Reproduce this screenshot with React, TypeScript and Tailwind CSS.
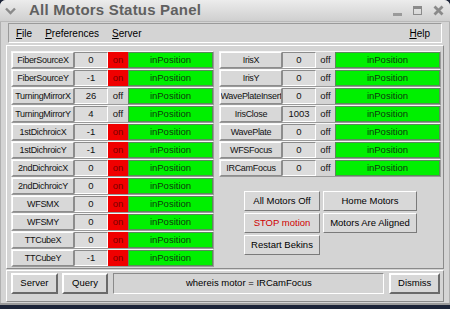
const font = { fontFamily: '"Liberation Sans", Arial, sans-serif' };

type Motor = { name: string; pos: string; on: boolean };

const left: Motor[] = [
  { name: "FiberSourceX", pos: "0", on: true },
  { name: "FiberSourceY", pos: "-1", on: true },
  { name: "TurningMirrorX", pos: "26", on: false },
  { name: "TurningMirrorY", pos: "4", on: false },
  { name: "1stDichroicX", pos: "-1", on: true },
  { name: "1stDichroicY", pos: "-1", on: true },
  { name: "2ndDichroicX", pos: "0", on: true },
  { name: "2ndDichroicY", pos: "0", on: true },
  { name: "WFSMX", pos: "0", on: true },
  { name: "WFSMY", pos: "0", on: true },
  { name: "TTCubeX", pos: "0", on: true },
  { name: "TTCubeY", pos: "-1", on: true },
];

const right: Motor[] = [
  { name: "IrisX", pos: "0", on: false },
  { name: "IrisY", pos: "0", on: false },
  { name: "WavePlateInsert", pos: "0", on: false },
  { name: "IrisClose", pos: "1003", on: false },
  { name: "WavePlate", pos: "0", on: false },
  { name: "WFSFocus", pos: "0", on: false },
  { name: "IRCamFocus", pos: "0", on: false },
];

function MotorRow({ m, wide }: { m: Motor; wide?: boolean }) {
  return (
    <div className="flex h-[18px] border border-t-[#f6f6f6] border-l-[#f6f6f6] border-b-[#9a9a9a] border-r-[#9a9a9a] text-[9.5px] leading-none text-[#111]">
      <div className="w-[62px] flex items-center justify-center overflow-hidden whitespace-nowrap bg-[#d8d8d8] border border-t-white border-l-white border-b-[#8c8c8c] border-r-[#8c8c8c] text-[9px] tracking-[-0.3px]">
        {m.name}
      </div>
      <div className="w-[34px] flex items-center justify-center bg-[#dcdcdc] border border-t-[#8c8c8c] border-l-[#8c8c8c] border-b-white border-r-white">
        {m.pos}
      </div>
      {m.on ? (
        <div className="w-[20px] flex items-center justify-center bg-[#f00000] text-[#7a0000]">on</div>
      ) : (
        <div className={`${wide ? "w-[19px]" : "w-[20px]"} flex items-center justify-center`}>off</div>
      )}
      <div className="flex-1 flex items-center justify-center bg-[#00f000] text-[#0d3a0d] border border-[#5a8a5a]">
        inPosition
      </div>
    </div>
  );
}

function Btn({ children, className = "" }: { children: React.ReactNode; className?: string }) {
  return (
    <div
      className={`h-[20px] flex items-center justify-center bg-[#d8d8d8] border border-t-white border-l-white border-b-[#7a7a7a] border-r-[#7a7a7a] text-[9.5px] ${className}`}
    >
      {children}
    </div>
  );
}

export default function App() {
  return (
    <div className="w-[450px] h-[309px] bg-[#1c2438] overflow-hidden" style={font}>
      <div className="w-[450px] h-[305px] bg-[#d4d4d4] rounded-t-[6px] flex flex-col border-b-2 border-[#9a9a9a]">
        {/* title bar */}
        <div className="h-[22px] flex items-center bg-gradient-to-b from-[#ececec] to-[#cfcfcf] rounded-t-[6px] border-b border-[#b8b8b8] pl-[5px] pr-[6px]">
          <svg width="11" height="8" viewBox="0 0 11 8" className="mr-[13px]">
            <path d="M1 1.5 L5.5 6 L10 1.5" fill="none" stroke="#8a8a8a" strokeWidth="2.4" />
          </svg>
          <span className="text-[15px] font-bold text-[#606060] tracking-[0.2px]">All Motors Status Panel</span>
          <div className="ml-auto flex items-center gap-[11px]">
            <div className="w-[9px] h-[3px] bg-[#9a9a9a] mt-[8px]" />
            <div className="w-[9px] h-[9px] border border-[#8a8a8a] border-t-[3px]" />
            <svg width="11" height="11" viewBox="0 0 11 11">
              <path d="M1.5 1.5 L9.5 9.5 M9.5 1.5 L1.5 9.5" stroke="#8a8a8a" strokeWidth="2.8" />
            </svg>
          </div>
        </div>

        <div className="flex-1 flex flex-col px-[5px] pt-[1px] border-l border-r border-[#b0b0b0]">
          {/* menu bar */}
          <div className="mx-[2px] h-[20px] flex items-center text-[10px] text-black border border-t-[#9a9a9a] border-l-[#9a9a9a] border-b-white border-r-white px-[7px]">
            <span className="mr-[13px]"><u>F</u>ile</span>
            <span className="mr-[13px]"><u>P</u>references</span>
            <span><u>S</u>erver</span>
            <span className="ml-auto mr-[4px]"><u>H</u>elp</span>
          </div>

          {/* main panel */}
          <div className="mt-[2px] h-[224px] border border-t-white border-l-white border-b-[#8a8a8a] border-r-[#8a8a8a] flex gap-[5px] pl-[4px] pt-[5px]">
            <div className="w-[203px] flex flex-col">
              {left.map((m) => (
                <MotorRow key={m.name} m={m} />
              ))}
            </div>
            <div className="w-[222px] flex flex-col">
              {right.map((m) => (
                <MotorRow key={m.name} m={m} wide />
              ))}
              <div className="mt-[14px] ml-[25px] flex flex-col gap-[2px]">
                <div className="flex gap-[3px]">
                  <Btn className="w-[76px]">All Motors Off</Btn>
                  <Btn className="w-[94px]">Home Motors</Btn>
                </div>
                <div className="flex gap-[3px]">
                  <Btn className="w-[76px] text-[#d00000]">STOP motion</Btn>
                  <Btn className="w-[94px]">Motors Are Aligned</Btn>
                </div>
                <div className="flex gap-[3px]">
                  <Btn className="w-[76px]">Restart Bekins</Btn>
                </div>
              </div>
            </div>
          </div>

          {/* bottom bar */}
          <div className="mt-[1px] h-[32px] border border-t-white border-l-white border-b-[#8a8a8a] border-r-[#8a8a8a] flex items-start pt-[2px] pl-[4px] pr-[3px] gap-[4px] text-[9.5px]">
            <div className="w-[47px] h-[21px] flex items-center justify-center bg-[#d8d8d8] border-2 border-t-white border-l-white border-b-[#6a6a6a] border-r-[#6a6a6a]">Server</div>
            <div className="w-[47px] h-[21px] flex items-center justify-center bg-[#d8d8d8] border-2 border-t-white border-l-white border-b-[#6a6a6a] border-r-[#6a6a6a]">Query</div>
            <div className="w-[273px] h-[21px] ml-[1px] flex items-center justify-center bg-[#d4d4d4] border border-t-[#8a8a8a] border-l-[#8a8a8a] border-b-white border-r-white">
              whereis motor = IRCamFocus
            </div>
            <div className="w-[51px] h-[21px] ml-[1px] flex items-center justify-center bg-[#d8d8d8] border-2 border-t-white border-l-white border-b-[#6a6a6a] border-r-[#6a6a6a]">Dismiss</div>
          </div>
        </div>
      </div>
    </div>
  );
}
